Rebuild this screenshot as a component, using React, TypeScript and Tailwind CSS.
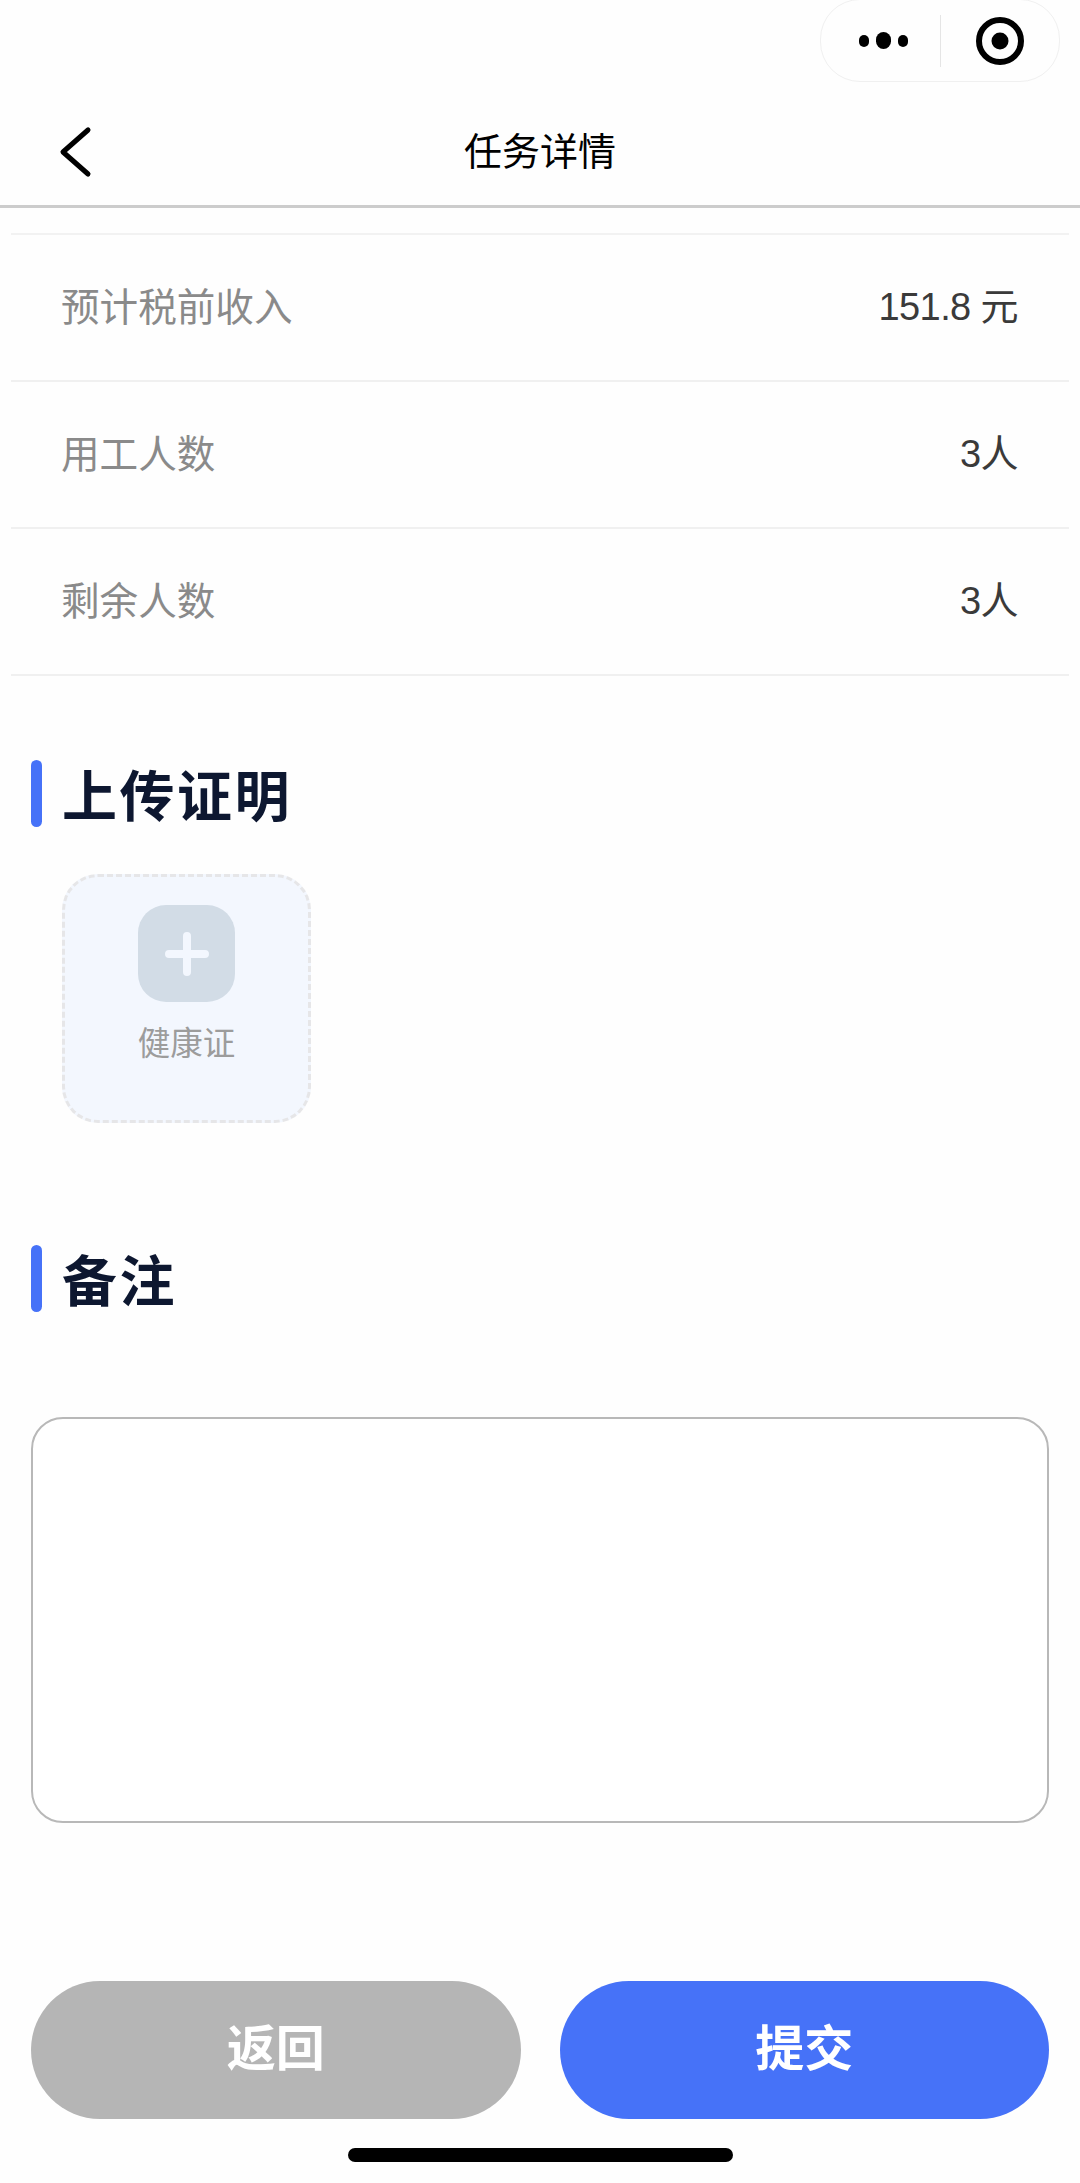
import React from "react";

const cjk = "font-['Liberation_Sans','Noto_Sans_CJK_SC',sans-serif]";

const rows = [
  { label: "预计税前收入", value: "151.8 元" },
  { label: "用工人数", value: "3人" },
  { label: "剩余人数", value: "3人" },
];

function SectionTitle({ children }: { children: React.ReactNode }) {
  return (
    <div className="flex items-center h-[67px] pl-[31px]">
      <div className="w-[11px] h-[67px] rounded-full bg-[#4672f8]" />
      <h2 className="ml-[20px] pt-[7px] text-[55px] leading-[67px] font-bold tracking-[2.5px] text-[#0d1730]">{children}</h2>
    </div>
  );
}

export default function App() {
  return (
    <div className={`${cjk} relative w-[1080px] h-[2183px] overflow-hidden bg-[#fefefe] flex flex-col`}>
      {/* mini-program capsule */}
      <div className="h-[82px] flex justify-end pr-[20px]">
        <div className="w-[240px] h-[83px] rounded-[40px] border border-[#f0f0f0] flex items-center -mt-px">
          <div className="w-[119px] flex items-center justify-center gap-[7px] pl-[6px]">
            <span className="w-[10px] h-[12px] rounded-full bg-black" />
            <span className="w-[15px] h-[17px] rounded-full bg-black" />
            <span className="w-[10px] h-[12px] rounded-full bg-black" />
          </div>
          <div className="w-px h-[52px] bg-[#e5e5e5]" />
          <div className="flex-1 flex items-center justify-center">
            <svg width="48" height="48" viewBox="0 0 48 48">
              <circle cx="24" cy="24" r="21" fill="none" stroke="#000" strokeWidth="6" />
              <circle cx="24" cy="24" r="8.5" fill="#000" />
            </svg>
          </div>
        </div>
      </div>

      {/* navigation bar */}
      <div className="relative h-[126px] flex items-center justify-center border-b-[3px] border-[#cccccc]">
        <svg className="absolute left-[58px] top-[43px]" width="36" height="54" viewBox="0 0 36 54" fill="none">
          <path d="M30 5 L5 27 L30 49" stroke="#000" strokeWidth="5" strokeLinecap="round" strokeLinejoin="round" />
        </svg>
        <span className="pt-[16px] text-[38px] leading-[50px] text-black">任务详情</span>
      </div>

      {/* task facts */}
      <div className="mt-[25px] mx-[11px] border-t-2 border-[#f2f2f2]">
        {rows.map((r) => (
          <div key={r.label} className="h-[147px] flex items-center justify-between pl-[50px] pr-[51px] border-b-2 border-[#f0f0f0]">
            <span className="text-[38.6px] text-[#8a8a8a]">{r.label}</span>
            <span className="text-[38px] tracking-[-0.6px] text-[#3a3a3a]">{r.value}</span>
          </div>
        ))}
      </div>

      {/* proof upload */}
      <div className="mt-[84px]">
        <SectionTitle>上传证明</SectionTitle>
      </div>
      <div className="mt-[47px] ml-[62px] w-[249px] h-[249px] rounded-[36px] border-[3px] border-dashed border-[#e6e6e8] bg-[#f3f7fe] flex flex-col items-center">
        <div className="mt-[28px] w-[97px] h-[97px] rounded-[28px] bg-[#d2dce6] flex items-center justify-center">
          <svg width="44" height="44" viewBox="0 0 44 44">
            <path d="M22 4 V40 M4 22 H40" stroke="#f3f7fe" strokeWidth="8" strokeLinecap="round" />
          </svg>
        </div>
        <span className="mt-[22px] text-[32.5px] leading-[40px] text-[#9c9c9c]">健康证</span>
      </div>

      {/* remarks */}
      <div className="mt-[122px]">
        <SectionTitle>备注</SectionTitle>
      </div>
      <div className="mt-[105px] mx-[31px] h-[406px] rounded-[32px] border-2 border-[#b8b8b8] bg-white" />

      {/* actions */}
      <div className="mt-[158px] px-[31px] flex gap-[39px]">
        <button className="flex-1 h-[138px] rounded-full bg-[#b5b5b5] text-white text-[49px] font-bold">返回</button>
        <button className="flex-1 h-[138px] rounded-full bg-[#4672f8] text-white text-[49px] font-bold">提交</button>
      </div>

      {/* home indicator */}
      <div className="mt-[29px] mx-auto w-[385px] h-[14px] rounded-full bg-black" />
    </div>
  );
}
